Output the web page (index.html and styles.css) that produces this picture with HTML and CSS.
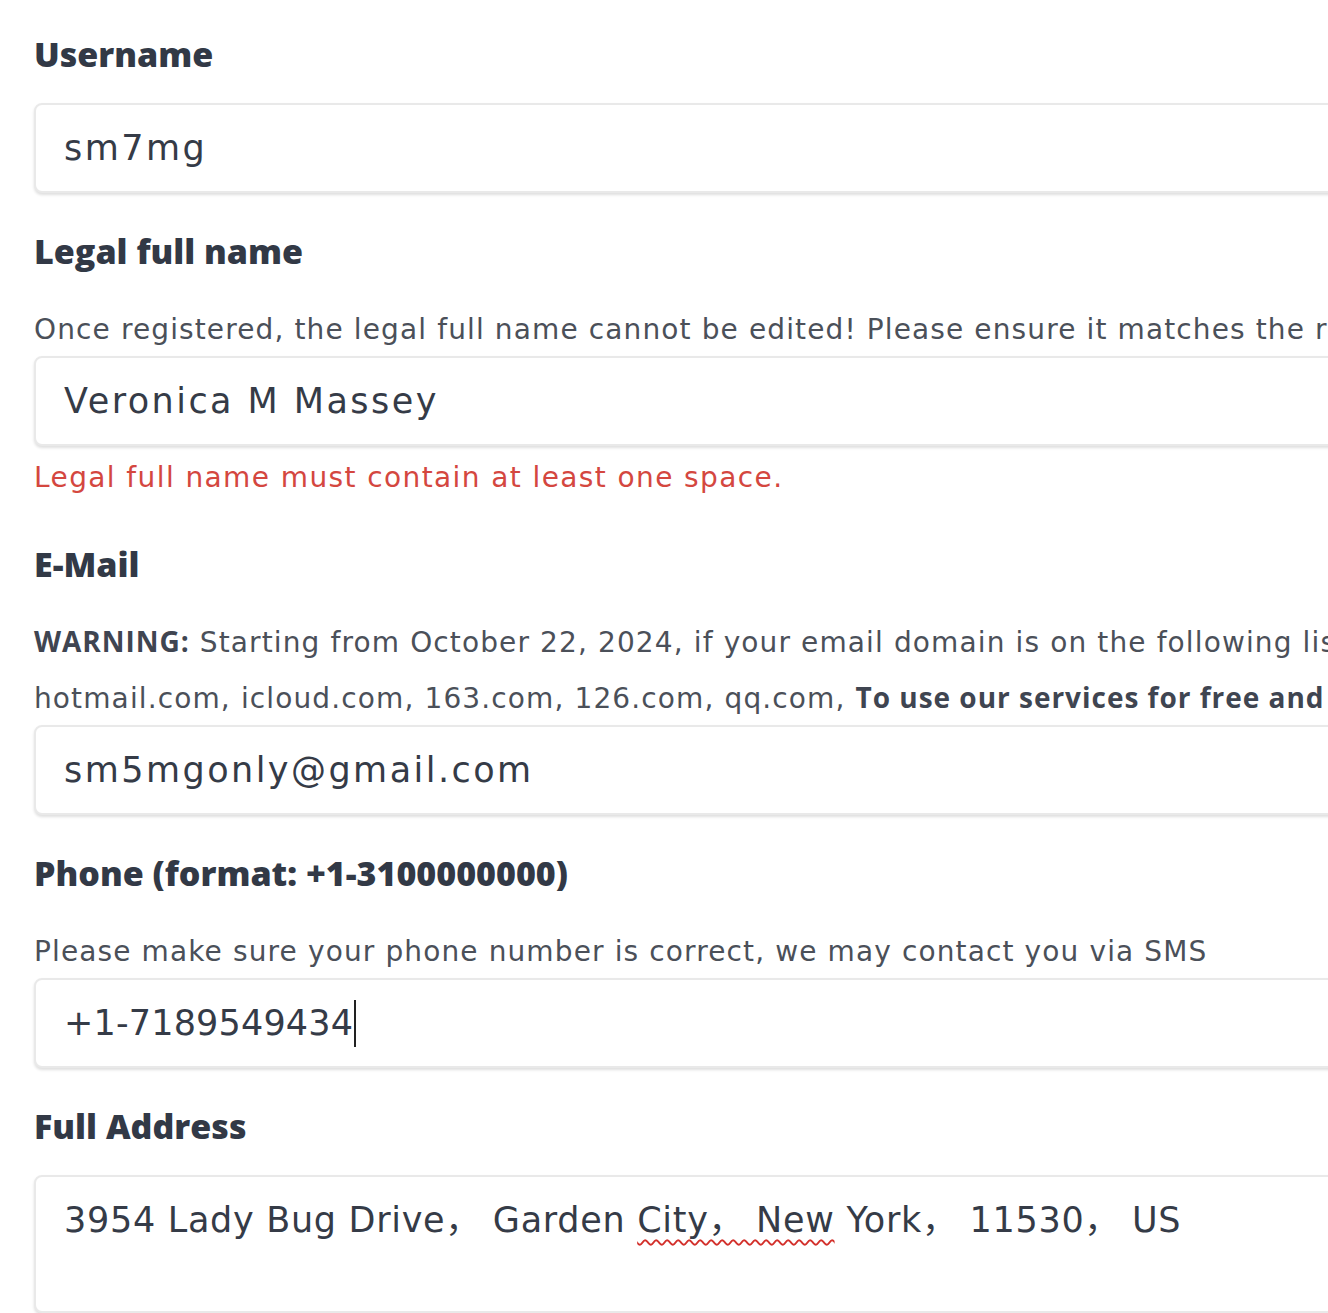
FILE: index.html
```html
<!DOCTYPE html>
<html lang="en">
<head>
<meta charset="utf-8">
<title>Account details</title>
<link rel="stylesheet" href="styles.css">
</head>
<body>
<form class="form">
  <div class="group">
    <label class="label">Username</label>
    <div class="field" role="textbox">sm7mg</div>
  </div>

  <div class="group">
    <label class="label">Legal full name</label>
    <p class="desc">Once registered, the legal full name cannot be edited! Please ensure it matches the real name on your ID document.</p>
    <div class="field" role="textbox">Veronica M Massey</div>
    <p class="error">Legal full name must contain at least one space.</p>
  </div>

  <div class="group">
    <label class="label">E-Mail</label>
    <p class="desc"><b>WARNING:</b> Starting from October 22, 2024, if your email domain is on the following list: gmail.com, outlook.com, yahoo.com,<br>hotmail.com, icloud.com, 163.com, 126.com, qq.com, <b>To use our services for free and without restrictions, please use another email.</b></p>
    <div class="field" role="textbox">sm5mgonly@gmail.com</div>
  </div>

  <div class="group">
    <label class="label">Phone (format: +1-3100000000)</label>
    <p class="desc">Please make sure your phone number is correct, we may contact you via SMS</p>
    <div class="field num" role="textbox">+1-7189549434<span class="caret"></span></div>
  </div>

  <div class="group">
    <label class="label">Full Address</label>
    <div class="field area" role="textbox">3954 Lady Bug Drive， Garden <span class="spell">City， New</span> York， 11530， US</div>
  </div>
</form>
</body>
</html>
```

FILE: styles.css
```css
html, body {
  margin: 0;
  padding: 0;
  overflow: hidden;
  background: #ffffff;
}

body {
  font-family: "DejaVu Sans", "Noto Sans CJK SC", sans-serif;
  color: #353b47;
}

.form {
  width: 1560px;
  padding: 33px 0 0 34px;
  display: flex;
  flex-direction: column;
  gap: 37px;
}

.group {
  display: flex;
  flex-direction: column;
}

.label {
  font-family: "Open Sans", sans-serif;
  font-weight: 800;
  font-size: 34px;
  line-height: 42px;
  color: #323946;
  margin: 0 0 28px;
  white-space: nowrap;
}

.desc {
  margin: 2px 0 -2px;
  font-size: 28px;
  line-height: 56px;
  letter-spacing: 0.04em;
  color: #4b5059;
  white-space: nowrap;
}

.desc b {
  font-family: "Open Sans", sans-serif;
  font-weight: 700;
  line-height: 1;
  letter-spacing: 0.035em;
  color: #3f4551;
}

.field {
  box-sizing: border-box;
  height: 90px;
  border: 2px solid #e9e9e9;
  border-radius: 8px;
  box-shadow: 0 2px 3px rgba(0, 0, 0, 0.13);
  background: #ffffff;
  padding: 0 28px;
  font-size: 35px;
  line-height: 86px;
  letter-spacing: 0.07em;
  color: #353b47;
  white-space: pre;
}

.field.num {
  letter-spacing: 0.005em;
}

.field.area {
  height: 138px;
  padding-top: 17px;
  line-height: 52px;
  letter-spacing: 0.02em;
}

.caret {
  display: inline-block;
  width: 2px;
  height: 47px;
  background: #222;
  margin-left: 1px;
  vertical-align: -12px;
}

.spell {
  text-decoration: underline wavy #d3302b;
  text-decoration-thickness: 1.5px;
  text-underline-offset: 7px;
}

.error {
  margin: 4px 0 0;
  font-size: 28px;
  line-height: 56px;
  letter-spacing: 0.05em;
  color: #d4473f;
  white-space: nowrap;
}
```
